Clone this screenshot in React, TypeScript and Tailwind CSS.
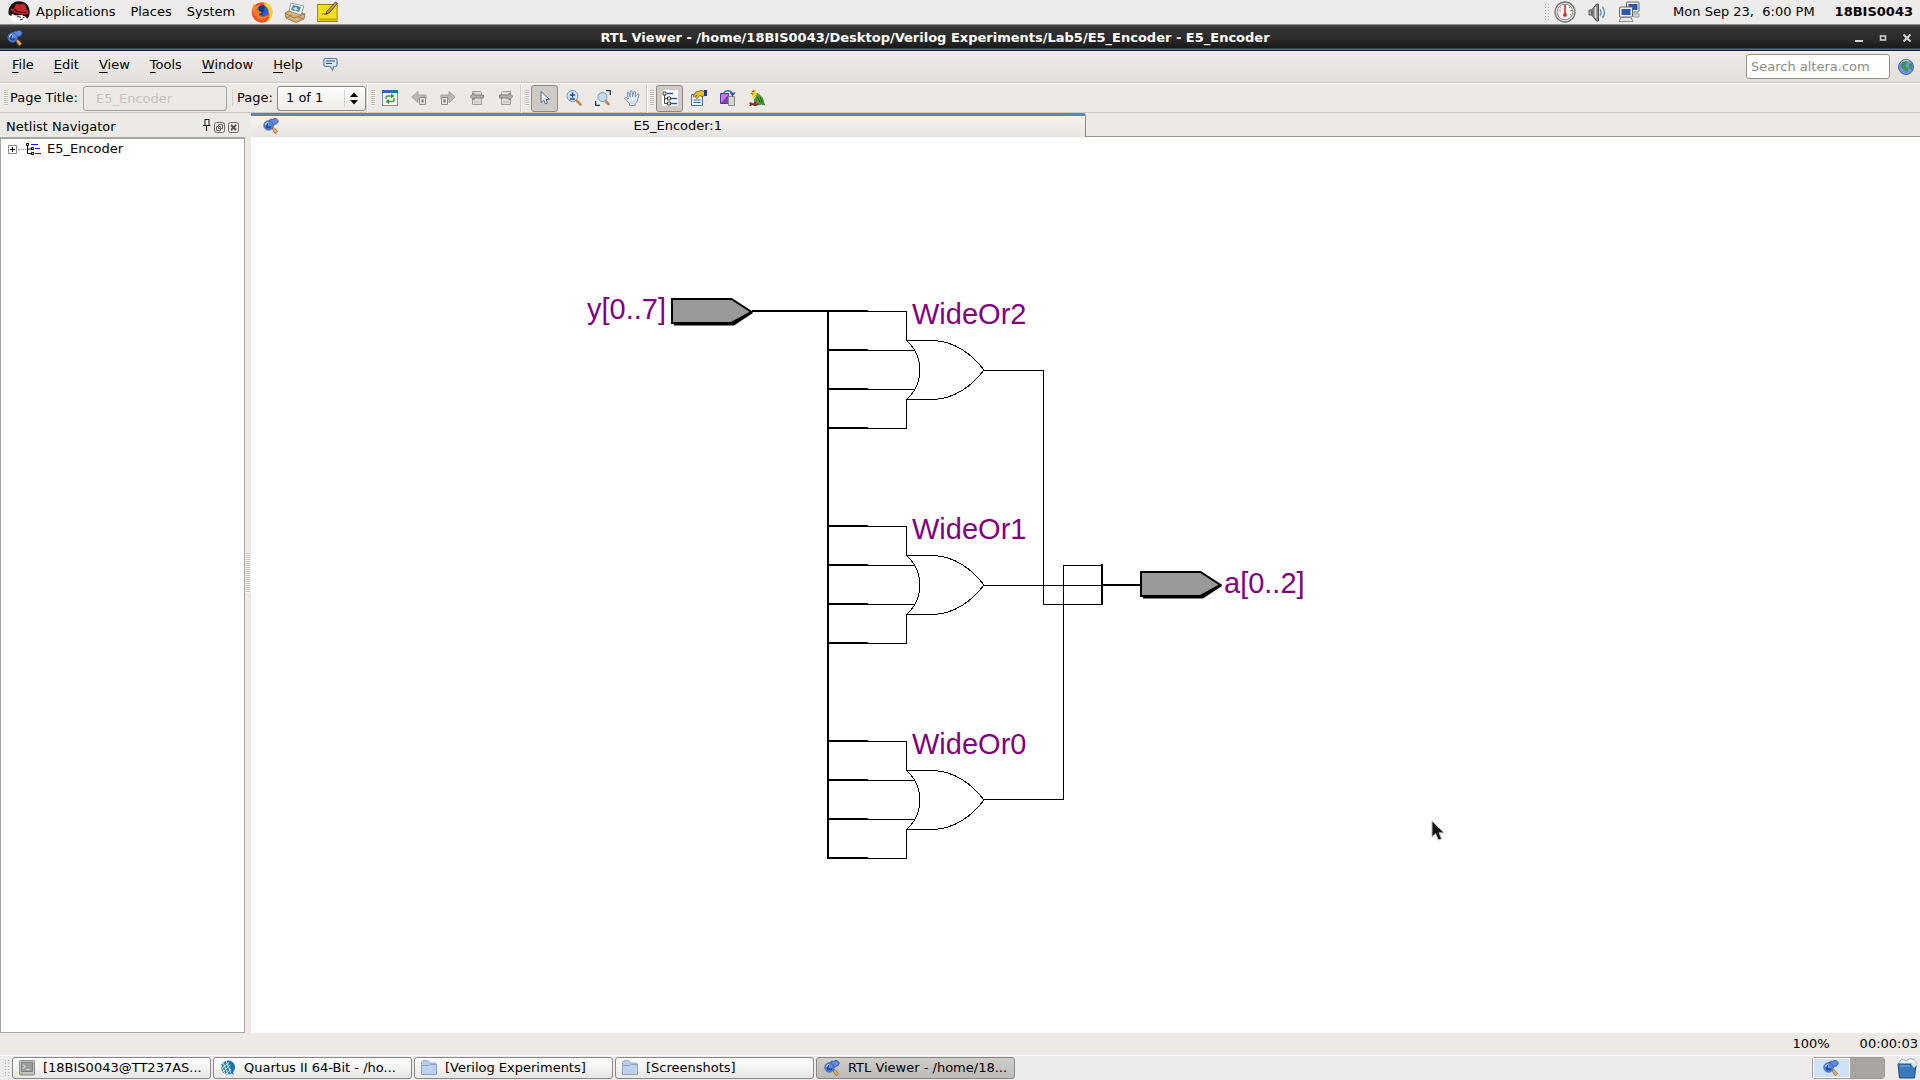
import type { ReactNode } from "react";

type IconProps = { className?: string };

function ViewerIcon({ className = "size-4" }: IconProps) {
  return (
    <svg className={className} viewBox="0 0 16 16" aria-hidden="true">
      <path d="M9 10.500l2-1 3.500 4-1.500 2-1.500-.5z" fill="#e8a860" stroke="#9a6a38" strokeWidth=".7" />
      <path d="M6 2.500L8 1l1.500.5L11 .5l2.500.3L15.500 3 14 5.500l-3 1.500-3-1z" fill="#5f8ae0" stroke="#2c4f9c" strokeWidth=".8" />
      <circle cx="5.500" cy="7.500" r="4.700" fill="#5a88dc" stroke="#3b5ca8" strokeWidth=".9" />
      <path d="M2 6.500a4 4 0 0 1 3-2.500l.5 2.500-1 2z" fill="#d5e4fb" />
      <path d="M4 5l1 0v3l4 .5-1.500 2H3.500l-1-2z" fill="#2450b4" />
    </svg>
  );
}

function RedHatIcon() {
  return (
    <svg className="size-[22px]" viewBox="0 0 22 22" aria-hidden="true">
      <circle cx="11" cy="11" r="10.800" fill="#fff" />
      <path d="M.5 13C-.2 6 4 .3 11 .3S22 5 21.700 12c-.3 2.500-1 4-2 5.500L14 14 3 15z" fill="#1b1212" />
      <path d="M2 8.500c1.500-1 3-1 4-.5L8 3l4 .5 4-1 3 6.500c2 1.500 2 4-1 4.500-5 .5-12-1-16-5z" fill="#c22a2c" />
      <path d="M6 8.500c3 2.500 8 3.500 12 2.500" stroke="#3c0b0d" fill="none" strokeWidth="1.200" />
      <path d="M4 13c4 1 5 3 9 2 2 0 5 0 5 2l-3 4c-6 1-10-2-12-5z" fill="#fff" />
      <path d="M9 15.500l4 .7m2 .3l1.500.2M12 19l3-1" stroke="#222" strokeWidth="1" />
    </svg>
  );
}

function FirefoxIcon() {
  return (
    <svg className="size-[22px]" viewBox="0 0 22 22" aria-hidden="true">
      <circle cx="11" cy="11.500" r="10.300" fill="#f4502c" />
      <path d="M13 .5c6 2 9 7 8.500 12-.5 4-3 7-6.500 8.500 3-3 4-6 3-9-1-5-5-6-5-11.500z" fill="#ffd02e" />
      <path d="M1.500 6L3 3l2 2.500L9 4l1 3-7 7z" fill="#ff8a1e" />
      <circle cx="11.500" cy="10.500" r="6" fill="#1f62c9" />
      <path d="M8 5l5-1 1 3-2 1 2 2-3 1 1 3-4-1z" fill="#17337e" />
      <path d="M4 8c2 0 3 .5 4 2l3 1c-1 2-3 1-3 3 3 3 6 2 9-1-1 6-8 7-11 4-2-2-3-5-2-9z" fill="#ff7a1c" />
    </svg>
  );
}

function MailIcon() {
  return (
    <svg className="size-[22px]" viewBox="0 0 22 22" aria-hidden="true">
      <path d="M1 12l8-4 12 5-1 5-8 3.500L2 17z" fill="#d9b27c" stroke="#8e6a3c" strokeWidth=".8" />
      <path d="M1 12l9 5 11-4M2 17l6-3m12 4l-6-2" stroke="#93703f" fill="none" strokeWidth=".8" />
      <path d="M7 2l13 3-3 9-12-4z" fill="#f4f4ee" stroke="#888" strokeWidth=".8" />
      <path d="M9 4l8 2-2 5-8-2z" fill="#4f8f9e" />
      <path d="M9 7l3-1 2 3-3 .5z" fill="#c4e2e6" />
    </svg>
  );
}

function NotesIcon() {
  return (
    <svg className="size-[22px]" viewBox="0 0 22 22" aria-hidden="true">
      <rect x=".6" y="3.500" width="19.500" height="17" fill="#f5df16" stroke="#9a8502" />
      <path d="M2 17.500h17v2H2z" fill="#c9a90a" />
      <path d="M5 13.500c2-2 4 1 6-1" stroke="#6d5b08" fill="none" />
      <path d="M9 13l1-3 8.500-9 2 1.500-8.500 9.500z" fill="#c89150" stroke="#5c3b17" strokeWidth=".9" />
    </svg>
  );
}

function GaugeIcon() {
  return (
    <svg className="size-[22px]" viewBox="0 0 22 22" aria-hidden="true">
      <circle cx="11" cy="11" r="10" fill="#e2e2e0" stroke="#7d7d7b" strokeWidth="1.400" />
      <circle cx="11" cy="11" r="7.800" fill="#fbfbfa" stroke="#8e8e8c" />
      <path d="M11 4v9" stroke="#d22" strokeWidth="1.600" />
      <circle cx="11" cy="14" r="2" fill="#c33" />
      <path d="M5 9l2 1m-.5-4l1 1.500" stroke="#d55" />
      <path d="M15 7l1-1m0 4l2-.5m-2 4l1 .5M5 13l-1 .5" stroke="#777" />
    </svg>
  );
}

function SpeakerIcon() {
  return (
    <svg className="h-[20px] w-[20px]" viewBox="0 0 20 20" aria-hidden="true">
      <path d="M2 8h3v5H2z" fill="#a9a9a7" stroke="#5d5d5b" />
      <path d="M5 7.500L9.500 2h2v17h-2L5 13.500z" fill="#8a8a88" stroke="#4c4c4a" />
      <path d="M8.500 5v11" stroke="#e4e4e2" strokeWidth="1.500" />
      <path d="M13 7.500c1.500 2 1.500 4 0 6m2.500-8.500c2.500 3 2.500 8 0 11" stroke="#5a8fd0" fill="none" strokeWidth="1.400" />
    </svg>
  );
}

function NetworkIcon() {
  return (
    <svg className="size-[22px]" viewBox="0 0 22 22" aria-hidden="true">
      <rect x="8.500" y="1" width="12.500" height="10" rx="1" fill="#eee" stroke="#6a6a68" />
      <path d="M10.500 3h9v6h-9z" fill="#2a5aa8" />
      <path d="M14 13h7v3h-5z" fill="#ddd" stroke="#888" strokeWidth=".8" />
      <rect x="1.500" y="6" width="13" height="10" rx="1" fill="#eee" stroke="#6a6a68" />
      <path d="M3.500 8h9v6h-9z" fill="#2a5aa8" />
      <path d="M3 16.500h10l2 4H1z" fill="#e5e5e2" stroke="#777" strokeWidth=".8" />
    </svg>
  );
}

function GlobeIcon() {
  return (
    <svg className="size-4" viewBox="0 0 16 16" aria-hidden="true">
      <circle cx="8" cy="8" r="7.500" fill="#6f93e8" stroke="#4b62b8" />
      <path d="M3 5l2-2.500 4-.5 1 1.500L7.500 6 8 8l2 1v2l-1 3-2-2.500L3.500 9zM11 5l2-1 1.500 3-.5 4-2-1-1.500-2z" fill="#3c9a46" />
      <path d="M3.500 3c2-1.500 5-2 7-1" stroke="#dbe9ff" fill="none" />
    </svg>
  );
}

function FeedbackIcon() {
  return (
    <svg className="size-[15px]" viewBox="0 0 15 15" aria-hidden="true">
      <path d="M2 1.500h11l1 1V8l-1 1.500h-2.500L9.500 13 7 9.500H2L.800 8V2.500z" fill="#dbe7f8" stroke="#5b7fb8" strokeWidth="1.200" />
      <path d="M3 4h9M3 6.500h6" stroke="#2f4f80" strokeWidth="1.100" />
    </svg>
  );
}

const toolIcon = "size-4";

function RefreshIcon() {
  return (
    <svg className={toolIcon} viewBox="0 0 16 16" aria-hidden="true">
      <rect x=".5" y=".5" width="15" height="15" fill="#f4f8fe" stroke="#6a94cc" />
      <path d="M0 0h16v3H0z" fill="#2f6ab8" />
      <path d="M4 9V7.500C4 6 5 6 6 6h4M12 8v2c0 1.500-1 1.500-2 1.500H6" stroke="#3fa33f" strokeWidth="1.500" fill="none" />
      <path d="M9 3.500L12.500 6 9 8.500zM7 9l-3.500 2.500L7 14z" fill="#2f9430" />
    </svg>
  );
}
function BackIcon({ className = toolIcon }: IconProps) {
  return (
    <svg className={className} viewBox="0 0 16 16" aria-hidden="true">
      <path d="M.8 7L7 1.500V5h8v4H7v3.500z" fill="#bcb9b5" stroke="#a19e9a" strokeWidth=".9" />
      <path d="M8.500 7.500h6v7h-6z" fill="#ebe9e6" stroke="#908d89" />
      <path d="M10.500 9.500h2v3h-2z" fill="#77746f" />
    </svg>
  );
}
function PageArrowIcon({ className = toolIcon }: IconProps) {
  return (
    <svg className={className} viewBox="0 0 16 16" aria-hidden="true">
      <path d="M3.500 1.500h8l1 1v12h-9z" fill="#dedbd7" stroke="#a19e99" />
      <path d="M1 6.500L5 3v2h9.500v3H5v2z" fill="#b3b0ac" stroke="#7d7a76" strokeWidth=".9" />
      <path d="M5 12h6" stroke="#c0bdb9" />
    </svg>
  );
}
function PointerIcon() {
  return (
    <svg className={toolIcon} viewBox="0 0 16 16" aria-hidden="true">
      <path d="M4 1.500v11l2.800-2.300L8.500 14l2-1-1.700-3.500h3.700z" fill="#e9f0fb" stroke="#4f6c98" />
    </svg>
  );
}
function ZoomIcon() {
  return (
    <svg className={toolIcon} viewBox="0 0 16 16" aria-hidden="true">
      <path d="M10.500 10.500l4 4" stroke="#c98848" strokeWidth="2.600" strokeLinecap="round" />
      <circle cx="6.500" cy="6" r="5.500" fill="#cfe2f8" stroke="#7795bd" />
      <path d="M6.500 2.500v5M4 5h5M4 9h5" stroke="#2346a8" strokeWidth="1.300" />
    </svg>
  );
}
function FitIcon() {
  return (
    <svg className={toolIcon} viewBox="0 0 16 16" aria-hidden="true">
      <path d="M10.500 11l3 3" stroke="#c98848" strokeWidth="2.600" strokeLinecap="round" />
      <circle cx="7.500" cy="7" r="4.500" fill="#c3dcf5" stroke="#7795bd" />
      <path d="M11 .7h4.300V5M.7 11v4.300H5" stroke="#1f3c6a" strokeWidth="1.300" fill="none" />
    </svg>
  );
}
function HandIcon() {
  return (
    <svg className={toolIcon} viewBox="0 0 16 16" aria-hidden="true">
      <path d="M5.500 15.500v-2L.8 8.500 2 7.300l2.500 1.500L3 2.800l1.500-.6L6.200 7 6.200 1.200 8 .7l.6 5.800 1.400-5 1.500.4-.4 5.300L13.500 4l1.700.6L13.200 11l-2 2.500v2z" fill="#e6eefc" stroke="#6f84b0" strokeWidth=".9" />
      <path d="M6 11.500h5M6 13.500h4.500" stroke="#c3d3f4" />
    </svg>
  );
}
function HierarchyIcon() {
  return (
    <svg className={toolIcon} viewBox="0 0 16 16" aria-hidden="true">
      <path d="M0 0h16v16H0z" fill="#fff" />
      <path d="M2.500 4v9.500H6M2.500 8.500H6" stroke="#444" fill="none" />
      <path d="M5 3.500h6M9 8.500h6M9 13.500h6" stroke="#2b55b5" strokeWidth="1.300" />
      <path d="M1 2h3v3H1zM5.500 7h3v3h-3zM5.500 12h3v3h-3z" fill="#f0e8c0" stroke="#333" strokeWidth=".9" />
    </svg>
  );
}
function PropertiesIcon() {
  return (
    <svg className={toolIcon} viewBox="0 0 16 16" aria-hidden="true">
      <path d="M.5 4.500h11v11H.5z" fill="#e8f1fc" stroke="#4a72b0" />
      <path d="M2.500 10h7M2.500 12.500h7" stroke="#3564b4" strokeWidth="1.200" />
      <path d="M2 6l3-4 5-1.500 4 1v4l-3 1-2-1-3 3-1.500-1.500L6 5 3.500 7z" fill="#f2bd29" stroke="#6e5208" strokeWidth=".8" />
      <path d="M13 0h3v6h-3z" fill="#183b88" />
    </svg>
  );
}
function ColorsIcon() {
  return (
    <svg className={toolIcon} viewBox="0 0 16 16" aria-hidden="true">
      <path d="M.5 3.500h8v10h-8z" fill="#c77be0" stroke="#4d3a9c" />
      <path d="M1 13l7-8v8z" fill="#7b3cc0" />
      <path d="M8.500 6.500h6v9h-6z" fill="#d4d4d2" stroke="#8b8b89" />
      <path d="M4 3C5 .3 10 0 12 3" stroke="#3f6ac0" fill="none" strokeWidth="1.500" />
      <path d="M9.500 2.500H15.500L12.500 6.500z" fill="#2a4cb0" />
    </svg>
  );
}
function ParrotIcon() {
  return (
    <svg className={toolIcon} viewBox="0 0 16 16" aria-hidden="true">
      <path d="M6 4l3-.5 4 4 1.500 4 1 3.500-3-1-3 1-4-4z" fill="#4fa02c" stroke="#2a641c" strokeWidth=".7" />
      <path d="M2 3L4 .5 6.500 1 8 3.500 7 7 5 9.500 3.500 6z" fill="#f6d533" />
      <path d="M2.500 2L4 .2l2.500.3L5 2z" fill="#d8501c" />
      <path d="M2 3h1.500v2.500z" fill="#5b3a10" />
      <path d="M8 7l3 5m0-5l2.500 6" stroke="#1d4d16" />
      <path d="M0 12.500h2.500l1.500 1 2-2.500 1.500 2.500 2 0v1.500H7.500l1.500 1H5l-1.500-1-1.500 1H0l1-1.500z" fill="#7c3a26" />
    </svg>
  );
}

function TreeIcon() {
  return (
    <svg className="h-3 w-[15px]" viewBox="0 0 15 12" aria-hidden="true">
      <path d="M1.500 3v7.500H5M1.500 6H5" stroke="#000" fill="none" />
      <path d="M5 1.500h7M9 5.500h5M9 10.500h6" stroke="#1414e0" />
      <path d="M.5.500h2v2h-2zM5.500 4.500h2v2h-2zM5.500 9.500h2v2h-2z" fill="#f5e663" stroke="#000" />
    </svg>
  );
}

function TerminalIcon() {
  return (
    <svg className="size-4" viewBox="0 0 16 16" aria-hidden="true">
      <rect x=".5" y=".5" width="15" height="14.500" rx="1" fill="#c2c3c0" stroke="#8b8c89" />
      <path d="M2.500 2.500h11v9h-11z" fill="#9a9e9a" stroke="#7c807c" />
      <path d="M4 4.500l2 2-2 2M7.500 9.500h3" stroke="#fff" fill="none" />
      <path d="M2 13.500h2" stroke="#6ad31c" />
    </svg>
  );
}
function QuartusIcon() {
  return (
    <svg className="size-4" viewBox="0 0 16 16" aria-hidden="true">
      <circle cx="8" cy="7.500" r="7" fill="#2b84c0" />
      <path d="M1 5l4 9M3 2.500l5 12M6 1l5 12M1.500 9l8-7M3 12l8-8M6 14l5-5" stroke="#dceefa" strokeWidth=".9" />
      <path d="M8 .5c5 .5 7.500 4 6.500 8.500L13 12l1 3-3-2c1-4 0-8.500-3-12.500z" fill="#1f72b0" />
    </svg>
  );
}
function FolderIcon() {
  return (
    <svg className="size-4" viewBox="0 0 16 16" aria-hidden="true">
      <path d="M.5 13V2L2 .7h5L8.500 3h6l1 1v9" fill="#b8cde6" stroke="#8fabd0" />
      <path d="M.5 5.500L8 5.500l1-1h6.500v10H.5z" fill="#bdd2ea" stroke="#86a4cc" />
    </svg>
  );
}
function TrashIcon() {
  return (
    <svg className="size-[21px]" viewBox="0 0 21 21" aria-hidden="true">
      <path d="M2 4l3-3 4 2 4-2.500 4 1L20 5l-1 5H2z" fill="#eef2f6" stroke="#8b98a6" strokeWidth=".8" />
      <path d="M1 6h18l-1.500 14h-15z" fill="#3a78bd" stroke="#1d4d86" />
      <path d="M14 6l5-3 1 4-3 3z" fill="#dfe7ee" />
      <path d="M3 8h10" stroke="#7fb0e2" />
    </svg>
  );
}

function PanelGrip() {
  return (
    <span className="h-[18px] w-[5px] shrink-0 bg-[radial-gradient(#b5b3b0_1px,transparent_1px)] bg-[length:3px_3px]" />
  );
}

function ToolGrip() {
  return (
    <span className="h-4 w-1 shrink-0 bg-[repeating-linear-gradient(to_bottom,#bdb8b3_0_1px,#fbfaf9_1px_2px)]" />
  );
}

function ToolDivider() {
  return <span className="h-[29px] w-[2px] shrink-0 border-l border-[#cfcbc6] bg-white" />;
}

function ToolButton({ label, active = false, children }: { label: string; active?: boolean; children: ReactNode }) {
  return (
    <span className="flex w-[29px] shrink-0 justify-center">
      <button
        type="button"
        aria-label={label}
        aria-pressed={active}
        className={
          active
            ? "flex h-[27px] w-[27px] items-center justify-center rounded-[3px] border border-[#8f8983] bg-[#cfcac4]"
            : "flex h-[27px] w-[27px] items-center justify-center"
        }
      >
        {children}
      </button>
    </span>
  );
}

function TopPanel() {
  return (
    <header className="flex h-6 items-center bg-[#edecea] pl-2 pr-[7px]">
      <RedHatIcon />
      <nav className="ml-[6px] flex items-center gap-[15px]" aria-label="Desktop">
        <button type="button">Applications</button>
        <button type="button">Places</button>
        <button type="button">System</button>
      </nav>
      <div className="ml-4 flex items-center gap-[11px]">
        <button type="button" aria-label="Firefox"><FirefoxIcon /></button>
        <button type="button" aria-label="Mail"><MailIcon /></button>
        <button type="button" aria-label="Notes"><NotesIcon /></button>
      </div>
      <div className="ml-auto flex items-center">
        <PanelGrip />
        <div className="ml-[5px] flex items-center gap-[11px]">
          <GaugeIcon />
          <SpeakerIcon />
          <NetworkIcon />
        </div>
        <time className="ml-[33px] whitespace-pre">Mon Sep 23,  6:00 PM</time>
        <button type="button" className="ml-5 font-bold">18BIS0043</button>
      </div>
    </header>
  );
}

function TitleBar() {
  return (
    <div className="flex h-[27px] items-center border-b border-t border-b-[#14202e] border-t-[#8c8b88] bg-[linear-gradient(to_bottom,#4a4a4a,#333_3px,#2d2d2d_50%,#1a1a1a_23px,#4f6a8c_24px)] pl-[7px] pr-[9px] text-white">
      <ViewerIcon />
      <h1 className="flex-1 pr-2 text-center text-[13px] font-bold">
        RTL Viewer - /home/18BIS0043/Desktop/Verilog Experiments/Lab5/E5_Encoder - E5_Encoder
      </h1>
      <div className="flex items-center gap-4">
        <button type="button" aria-label="Minimize">
          <svg className="h-2 w-2" viewBox="0 0 8 8"><path d="M0 7h8" stroke="#d5d5d3" strokeWidth="2" /></svg>
        </button>
        <button type="button" aria-label="Restore">
          <svg className="h-2 w-2" viewBox="0 0 8 8"><path d="M1.500 2h5v4h-5z" fill="none" stroke="#d5d5d3" strokeWidth="1.500" /></svg>
        </button>
        <button type="button" aria-label="Close">
          <svg className="h-2 w-2" viewBox="0 0 8 8"><path d="M.5.500l7 7m0-7l-7 7" stroke="#d5d5d3" strokeWidth="2" /></svg>
        </button>
      </div>
    </div>
  );
}

const menus = ["File", "Edit", "View", "Tools", "Window", "Help"];

function MenuBar() {
  return (
    <div className="flex h-8 items-center border-b border-[#cdc9c5] bg-[linear-gradient(to_bottom,#efece8,#e3dfdb)] pl-3 pr-[6px]">
      <nav className="-mt-1 flex items-center gap-5" aria-label="Menu">
        {menus.map((m) => (
          <button type="button" key={m}>
            <span className="underline underline-offset-[3px]">{m[0]}</span>
            {m.slice(1)}
          </button>
        ))}
        <button type="button" aria-label="Feedback"><FeedbackIcon /></button>
      </nav>
      <div className="ml-auto flex items-center gap-2">
        <input
          aria-label="Search altera.com"
          placeholder="Search altera.com"
          className="h-[25px] w-[144px] rounded-[3px] border border-[#958f89] bg-white px-1 placeholder:text-[#8c8c8c]"
        />
        <button type="button" aria-label="Search"><GlobeIcon /></button>
      </div>
    </div>
  );
}

function ToolBar() {
  return (
    <div className="flex h-[30px] items-center border-b border-t border-b-[#cbc7c2] border-t-white pl-1">
      <ToolGrip />
      <label htmlFor="page-title" className="ml-[2px] w-[73px] whitespace-nowrap">Page Title:</label>
      <input
        id="page-title"
        disabled
        defaultValue="E5_Encoder"
        className="h-[25px] w-[144px] rounded-[3px] border border-[#a7a19b] bg-[#edeae6] px-3 text-[#c6c2be]"
      />
      <span className="ml-[5px] h-4 border-l border-[#cfcbc6]" />
      <label htmlFor="page" className="ml-1 w-10">Page:</label>
      <div className="relative">
        <select
          id="page"
          className="h-[25px] w-[89px] appearance-none rounded-[3px] border border-[#8f8983] bg-[linear-gradient(to_bottom,#fefefe,#efebe7)] pl-2"
        >
          <option>1 of 1</option>
        </select>
        <svg className="pointer-events-none absolute right-1 top-1 h-[17px] w-[18px]" viewBox="0 0 18 17" aria-hidden="true">
          <path d="M.5 0v17" stroke="#d3cfca" />
          <path d="M6 7l4-4.500L14 7zM6 10l4 4.500L14 10z" fill="#000" />
        </svg>
      </div>
      <ToolDivider />
      <span className="w-[3px]" />
      <ToolGrip />
      <ToolButton label="Refresh"><RefreshIcon /></ToolButton>
      <ToolButton label="Back"><BackIcon /></ToolButton>
      <ToolButton label="Forward"><BackIcon className="size-4 -scale-x-100" /></ToolButton>
      <ToolButton label="Previous page"><PageArrowIcon /></ToolButton>
      <ToolButton label="Next page"><PageArrowIcon className="size-4 -scale-x-100" /></ToolButton>
      <ToolDivider />
      <span className="w-[3px]" />
      <ToolGrip />
      <span className="w-[1px]" />
      <ToolButton label="Selection" active><PointerIcon /></ToolButton>
      <ToolButton label="Zoom"><ZoomIcon /></ToolButton>
      <ToolButton label="Fit in window"><FitIcon /></ToolButton>
      <ToolButton label="Pan"><HandIcon /></ToolButton>
      <ToolDivider />
      <span className="w-[2px]" />
      <ToolGrip />
      <span className="w-[1px]" />
      <ToolButton label="Netlist Navigator" active><HierarchyIcon /></ToolButton>
      <ToolButton label="Properties"><PropertiesIcon /></ToolButton>
      <ToolButton label="Colors"><ColorsIcon /></ToolButton>
      <ToolButton label="Bird's eye view"><ParrotIcon /></ToolButton>
    </div>
  );
}

function Navigator() {
  return (
    <aside className="flex w-[245px] shrink-0 flex-col">
      <div className="flex h-6 items-center pl-[6px] pr-[6px] pt-1">
        <h2>Netlist Navigator</h2>
        <div className="ml-auto flex items-center gap-[3px]">
          <button type="button" aria-label="Pin" className="pb-1">
            <svg className="h-[13px] w-2" viewBox="0 0 8 13"><path d="M2 .5h4v6H2zM0 6.500h7.500M3.500 7v5" fill="#fff" stroke="#222" strokeWidth="1.100" /></svg>
          </button>
          <button type="button" aria-label="Float">
            <svg className="size-[11px]" viewBox="0 0 11 11"><rect x=".5" y=".5" width="10" height="10" rx="2" fill="none" stroke="#6d6a66" /><path d="M4.500 2.500h4v4h-4zM2.500 4.500h4v4h-4z" fill="#edeae6" stroke="#6d6a66" /></svg>
          </button>
          <button type="button" aria-label="Close panel">
            <svg className="size-[11px]" viewBox="0 0 11 11"><rect x=".5" y=".5" width="10" height="10" rx="2" fill="none" stroke="#6d6a66" /><path d="M3 3l5 5m0-5L3 8" stroke="#55524e" strokeWidth="1.800" /></svg>
          </button>
        </div>
      </div>
      <ul className="flex-1 border border-t-2 border-[#aaa5a0] bg-white">
        <li className="flex h-5 items-center pl-[7px]">
          <button type="button" aria-label="Expand E5_Encoder">
            <svg className="h-[9px] w-[9px]" viewBox="0 0 9 9"><path d="M.5.500h8v8h-8z" fill="#fff" stroke="#8d8983" /><path d="M2 4.500h5M4.500 2v5" stroke="#000" /></svg>
          </button>
          <span className="ml-[1px] w-[8px] border-t border-dotted border-[#a5a19c]" />
          <TreeIcon />
          <span className="ml-[6px]">E5_Encoder</span>
        </li>
      </ul>
    </aside>
  );
}

function OrGate({ y, outY, outX }: { y: number; outY: number; outX: number }) {
  return (
    <g fill="none" stroke="#000">
      {[0, 39, 78, 117].map((d) => (
        <path key={d} d={`M828 ${y + d}H868`} strokeWidth="2" />
      ))}
      <path d={`M868 ${y + 0.5}H906.500V${y + 29.5}H933C954 ${y + 30} 972 ${y + 43} 984 ${y + 59}C972 ${y + 75} 954 ${y + 88} 933 ${y + 88.5}H906.500V${y + 117.5}H868`} />
      <path d={`M868 ${y + 39.5}H914M868 ${y + 78.5}H914`} />
      <path d={`M907 ${y + 30}C924 ${y + 45} 924 ${y + 73} 907 ${y + 88}`} />
      <path d={`M984 ${outY}H${outX}`} />
    </g>
  );
}

function Pin({ x, y }: { x: number; y: number }) {
  return (
    <g>
      <path d={`M${x + 3} ${y + 3}h58l21 12-19 12.500h-60z`} fill="#000" />
      <path d={`M${x + 1} ${y + 1}h59.500l20 13-20 11h-59.500z`} fill="#999" stroke="#000" strokeWidth="2" />
    </g>
  );
}

function Schematic() {
  return (
    <svg
      className="absolute left-[329px] top-[143px] h-[600px] w-[740px]"
      viewBox="580 280 740 600"
      role="img"
      aria-label="Encoder schematic"
    >
      <g shapeRendering="crispEdges">
        <path d="M752 311H868M828 310V859" stroke="#000" strokeWidth="2" fill="none" />
        <OrGate y={311} outY={370.5} outX={1043} />
        <OrGate y={526} outY={585.5} outX={1102} />
        <OrGate y={741} outY={799.5} outX={1063} />
        <path d="M1043.500 370V604.500H1102M1063.500 800V565.500H1102" stroke="#000" fill="none" />
        <path d="M1102 564V605M1102 585H1141" stroke="#000" strokeWidth="2" fill="none" />
      </g>
      <Pin x={671} y={298} />
      <Pin x={1140} y={571} />
      <g fill="#800080" fontSize="29" fontFamily="'Liberation Sans', Arial, sans-serif">
        <text x="587" y="319">y[0..7]</text>
        <text x="912" y="324">WideOr2</text>
        <text x="912" y="539">WideOr1</text>
        <text x="912" y="754">WideOr0</text>
        <text x="1224" y="593">a[0..2]</text>
      </g>
    </svg>
  );
}

function Workspace() {
  return (
    <main className="flex min-w-0 flex-1 flex-col">
      <div className="flex h-6 items-stretch">
        <button
          type="button"
          className="flex w-1/2 items-center rounded-tr-[3px] border-r border-t-[3px] border-r-[#8f8983] border-t-[#5a86b0] bg-[linear-gradient(to_bottom,#f6f4f1,#e8e4e0)] pb-[2px] pl-3 pr-2"
        >
          <ViewerIcon />
          <span className="flex-1 text-center">E5_Encoder:1</span>
        </button>
        <span className="flex-1 border-b border-[#9b958e]" />
      </div>
      <div className="relative flex-1 overflow-hidden bg-white">
        <Schematic />
        <svg className="absolute left-[1180px] top-[683px] h-[22px] w-[14px]" viewBox="0 0 14 22" aria-hidden="true">
          <path d="M1 1v16l3.500-3.500L7.500 20l3-1.200-2.500-6H13z" fill="#111" stroke="#b4b4b4" />
        </svg>
      </div>
    </main>
  );
}

const tasks: { title: string; icon: ReactNode; active?: boolean }[] = [
  { title: "[18BIS0043@TT237AS...", icon: <TerminalIcon /> },
  { title: "Quartus II 64-Bit - /ho...", icon: <QuartusIcon /> },
  { title: "[Verilog Experiments]", icon: <FolderIcon /> },
  { title: "[Screenshots]", icon: <FolderIcon /> },
  { title: "RTL Viewer - /home/18...", icon: <ViewerIcon />, active: true },
];

function TaskBar() {
  return (
    <footer className="flex h-[25px] items-center border-t border-white bg-[#edecea] pl-1 pr-[2px]">
      <PanelGrip />
      <div className="ml-[3px] flex gap-[2px]">
        {tasks.map((t) => (
          <button
            type="button"
            key={t.title}
            className={
              t.active
                ? "flex h-[22px] w-[199px] items-center gap-2 whitespace-nowrap rounded-[3px] border border-[#8a8784] bg-[linear-gradient(to_bottom,#cfcdca,#bdbab7)] pl-[7px]"
                : "flex h-[22px] w-[199px] items-center gap-2 whitespace-nowrap rounded-[3px] border border-[#8a8784] bg-[linear-gradient(to_bottom,#fff,#e8e7e5)] pl-[6px]"
            }
          >
            {t.icon}
            {t.title}
          </button>
        ))}
      </div>
      <div className="ml-auto flex items-center gap-3">
        <div className="flex h-[22px] w-[73px] overflow-hidden rounded-[3px] border border-[#a19d99]">
          <button type="button" aria-label="Workspace 1" className="flex flex-1 items-center justify-center border border-white bg-[#cfe1f7]">
            <ViewerIcon />
          </button>
          <button type="button" aria-label="Workspace 2" className="flex-1 bg-[#a8a4a1]" />
        </div>
        <button type="button" aria-label="Trash"><TrashIcon /></button>
      </div>
    </footer>
  );
}

export default function App() {
  return (
    <div className="flex min-h-screen flex-col bg-[#edeae6] font-['DejaVu_Sans',Verdana,sans-serif] text-[13px] leading-4 text-black">
      <TopPanel />
      <TitleBar />
      <MenuBar />
      <ToolBar />
      <div className="flex flex-1">
        <Navigator />
        <div className="flex w-[6px] shrink-0 items-center justify-center">
          <span className="h-10 w-1 bg-[repeating-linear-gradient(to_bottom,#c9c4bf_0_1px,#fbfaf9_1px_2px)]" />
        </div>
        <Workspace />
      </div>
      <div className="flex h-[22px] items-center justify-end gap-[30px] pr-[2px]">
        <span>100%</span>
        <span>00:00:03</span>
      </div>
      <TaskBar />
    </div>
  );
}
